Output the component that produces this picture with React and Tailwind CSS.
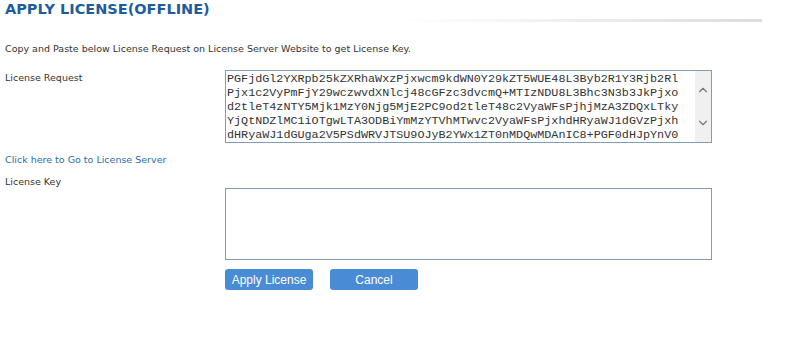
import { ChevronUp, ChevronDown } from 'lucide-react';

const requestLines = [
    'PGFjdGl2YXRpb25kZXRhaWxzPjxwcm9kdWN0Y29kZT5WUE48L3Byb2R1Y3Rjb2Rl',
    'Pjx1c2VyPmFjY29wczwvdXNlcj48cGFzc3dvcmQ+MTIzNDU8L3Bhc3N3b3JkPjxo',
    'd2tleT4zNTY5Mjk1MzY0Njg5MjE2PC9od2tleT48c2VyaWFsPjhjMzA3ZDQxLTky',
    'YjQtNDZlMC1iOTgwLTA3ODBiYmMzYTVhMTwvc2VyaWFsPjxhdHRyaWJ1dGVzPjxh',
    'dHRyaWJ1dGUga2V5PSdWRVJTSU9OJyB2YWx1ZT0nMDQwMDAnIC8+PGF0dHJpYnV0',
];

const App = () => {
    return (
        <div className="w-[801px] h-[342px] bg-white font-['DejaVu_Sans',sans-serif] text-[#333] overflow-hidden">
            <div className="flex items-end">
                <h1 className="pl-[5px] pt-[1px] text-[14.5px] leading-[17px] font-bold text-[#1d5c9f] whitespace-nowrap">APPLY LICENSE(OFFLINE)</h1>
                <div className="ml-[190px] mb-[-4px] w-[362px] h-[3px] bg-gradient-to-r from-white to-[#dcdcdc]" />
            </div>

            <p className="mt-[24px] pl-[5px] text-[9.5px] leading-[13px]">
                Copy and Paste below License Request on License Server Website to get License Key.
            </p>

            <div className="flex mt-[15px]">
                <div className="w-[225px] pl-[5px] pt-[1px] text-[9.5px] leading-[13px]">License Request</div>
                <div className="flex w-[487px] h-[73px] border border-[#7f9db9] bg-white">
                    <div className="flex-1 pl-[1px] pt-[1px] font-['Liberation_Mono',monospace] text-[11.75px] leading-[14px] text-[#333] whitespace-pre overflow-hidden">
                        {requestLines.map((line, idx) => (
                            <div key={idx}>{line}</div>
                        ))}
                    </div>
                    <div className="w-[16px] bg-[#f0f0f0] flex flex-col items-center justify-between py-[12px] text-[#777]">
                        <ChevronUp size={14} strokeWidth={2} />
                        <ChevronDown size={14} strokeWidth={2} />
                    </div>
                </div>
            </div>

            <a className="block mt-[10px] pl-[5px] text-[9.5px] leading-[13px] text-[#2b6cae]">Click here to Go to License Server</a>

            <div className="mt-[9px] pl-[5px] text-[9.5px] leading-[13px]">License Key</div>

            <div className="ml-[225px] mt-0 w-[487px] h-[72px] border border-[#7f9db9] bg-white" />

            <div className="flex gap-[17px] ml-[225px] mt-[9px] font-['Liberation_Sans',Arial,sans-serif]">
                <button className="w-[88px] h-[21px] rounded-[3px] bg-[#4a8bd6] text-white text-[12px]">Apply License</button>
                <button className="w-[88px] h-[21px] rounded-[3px] bg-[#4a8bd6] text-white text-[12px]">Cancel</button>
            </div>
        </div>
    );
};

export default App;
